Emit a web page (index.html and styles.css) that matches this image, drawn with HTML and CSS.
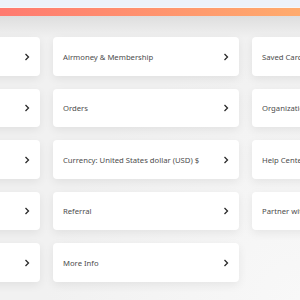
FILE: index.html
```html
<!DOCTYPE html>
<html lang="en">
<head>
    <meta charset="UTF-8">
    <meta name="viewport" content="width=device-width, initial-scale=1.0">
    <title>Account</title>
    <link rel="stylesheet" href="styles.css">
</head>
<body>
    <div class="topbar"></div>
    <div class="accent"></div>
    <div class="page">
        <div class="menu">
            <a class="item"><span>My Profile</span><svg class="chev" viewBox="0 0 6 8"><path d="M1.5 1 L4.5 4 L1.5 7"/></svg></a>
            <a class="item"><span>Travellers</span><svg class="chev" viewBox="0 0 6 8"><path d="M1.5 1 L4.5 4 L1.5 7"/></svg></a>
            <a class="item"><span>Language</span><svg class="chev" viewBox="0 0 6 8"><path d="M1.5 1 L4.5 4 L1.5 7"/></svg></a>
            <a class="item"><span>Notifications</span><svg class="chev" viewBox="0 0 6 8"><path d="M1.5 1 L4.5 4 L1.5 7"/></svg></a>
            <a class="item"><span>Settings</span><svg class="chev" viewBox="0 0 6 8"><path d="M1.5 1 L4.5 4 L1.5 7"/></svg></a>

            <a class="item"><span>Airmoney &amp; Membership</span><svg class="chev" viewBox="0 0 6 8"><path d="M1.5 1 L4.5 4 L1.5 7"/></svg></a>
            <a class="item"><span>Orders</span><svg class="chev" viewBox="0 0 6 8"><path d="M1.5 1 L4.5 4 L1.5 7"/></svg></a>
            <a class="item"><span>Currency: United States dollar (USD) $</span><svg class="chev" viewBox="0 0 6 8"><path d="M1.5 1 L4.5 4 L1.5 7"/></svg></a>
            <a class="item"><span>Referral</span><svg class="chev" viewBox="0 0 6 8"><path d="M1.5 1 L4.5 4 L1.5 7"/></svg></a>
            <a class="item"><span>More Info</span><svg class="chev" viewBox="0 0 6 8"><path d="M1.5 1 L4.5 4 L1.5 7"/></svg></a>

            <a class="item"><span>Saved Cards</span><svg class="chev" viewBox="0 0 6 8"><path d="M1.5 1 L4.5 4 L1.5 7"/></svg></a>
            <a class="item"><span>Organizations</span><svg class="chev" viewBox="0 0 6 8"><path d="M1.5 1 L4.5 4 L1.5 7"/></svg></a>
            <a class="item"><span>Help Center</span><svg class="chev" viewBox="0 0 6 8"><path d="M1.5 1 L4.5 4 L1.5 7"/></svg></a>
            <a class="item"><span>Partner with us</span><svg class="chev" viewBox="0 0 6 8"><path d="M1.5 1 L4.5 4 L1.5 7"/></svg></a>
        </div>
    </div>
</body>
</html>
```

FILE: styles.css
```css
:root {
    --strip-color: #edf2fa;
    --bg-color: #f1f1f1;
    --card-color: #ffffff;
    --text-color: #4d4d4d;
}
html, body {
    margin: 0;
    height: 100%;
    overflow: hidden;
}
body {
    font-family: 'Noto Sans', 'Open Sans', sans-serif;
    background-color: var(--bg-color);
    background-image: radial-gradient(circle at 100% 100%, #f8f8f8 0, #f1f1f1 60%);
    color: var(--text-color);
}
.topbar {
    height: 7px;
    background-color: var(--strip-color);
    border-bottom: 1px solid #f7f7f7;
}
.accent {
    height: 8px;
    background: linear-gradient(90deg, #ff7a70, #ffab6d);
}
.page {
    padding-top: 21px;
    background: linear-gradient(180deg, #dedede 0, rgba(241, 241, 241, 0) 22px);
}
.menu {
    display: grid;
    grid-template-rows: repeat(5, 38.5px);
    grid-auto-flow: column;
    grid-auto-columns: 186px;
    column-gap: 13px;
    row-gap: 13px;
    margin-left: -146px;
}
.item {
    display: flex;
    align-items: center;
    justify-content: space-between;
    padding: 1px 10px 0;
    background-color: var(--card-color);
    border-radius: 4px;
    box-shadow: 0 3px 10px rgba(0, 0, 0, 0.07);
    font-size: 7.7px;
    white-space: nowrap;
}
.chev {
    width: 6px;
    height: 8px;
    fill: none;
    stroke: #2a2a2a;
    stroke-width: 1.3;
}
```
